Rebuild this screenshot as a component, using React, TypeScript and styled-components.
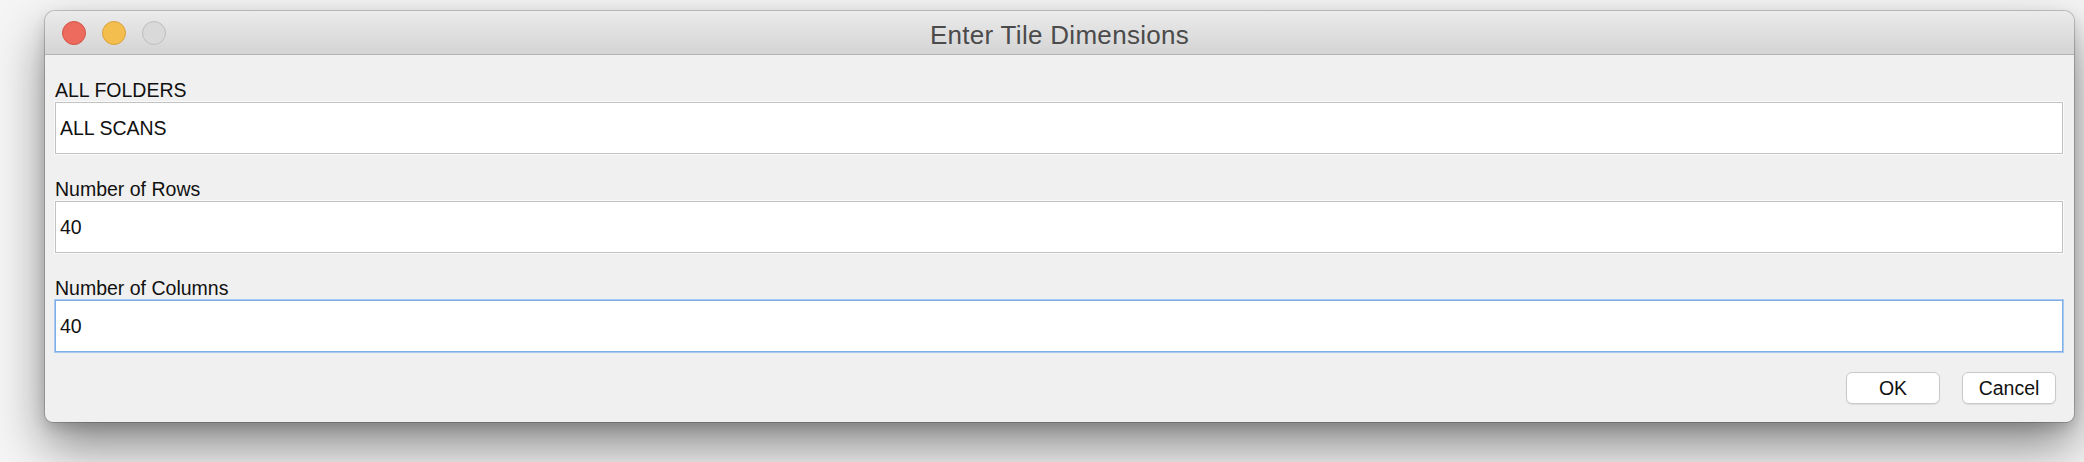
import React from "react";
import styled, { createGlobalStyle } from "styled-components";

const GlobalStyle = createGlobalStyle`
  html, body {
    margin: 0;
    padding: 0;
    background: #f5f5f5;
    font-family: "Liberation Sans", Arial, sans-serif;
  }
`;

const Page = styled.div`
  width: 2084px;
  height: 462px;
  padding: 11px 10px 0 45px;
  box-sizing: border-box;
  overflow: hidden;
`;

const Window = styled.div`
  width: 2029px;
  height: 411px;
  display: flex;
  flex-direction: column;
  background: #f0f0f0;
  border-radius: 10px 10px 8px 8px;
  box-shadow: 0 0 0 1px rgba(0, 0, 0, 0.18), 0 24px 50px rgba(0, 0, 0, 0.45),
    0 6px 14px rgba(0, 0, 0, 0.14);
  overflow: hidden;
`;

const TitleBar = styled.div`
  height: 44px;
  flex: none;
  display: grid;
  grid-template-columns: 1fr auto 1fr;
  align-items: center;
  padding: 0 17px;
  box-sizing: border-box;
  background: linear-gradient(#ebebeb, #d4d4d4);
  border-bottom: 1px solid #b4b4b4;
`;

const Lights = styled.div`
  display: flex;
  gap: 16px;
`;

const Light = styled.span<{ $fill: string; $edge: string }>`
  width: 24px;
  height: 24px;
  border-radius: 50%;
  box-sizing: border-box;
  background: ${(p) => p.$fill};
  border: 1px solid ${(p) => p.$edge};
`;

const Title = styled.div`
  font-size: 26px;
  line-height: 30px;
  padding-top: 4px;
  color: #4b4b4b;
  letter-spacing: 0.3px;
`;

const Content = styled.div`
  flex: 1;
  display: flex;
  flex-direction: column;
  padding: 24px 11px 18px 10px;
`;

const Field = styled.div`
  display: flex;
  flex-direction: column;
  & + & {
    margin-top: 24px;
  }
`;

const Label = styled.label`
  font-size: 19.5px;
  line-height: 22px;
  color: #111;
  margin-bottom: 1px;
`;

const Input = styled.input<{ $focused?: boolean }>`
  height: 52px;
  box-sizing: border-box;
  padding: 0 4px;
  font-family: "Liberation Sans", Arial, sans-serif;
  font-size: 19.5px;
  color: #111;
  background: #fff;
  border: 1px solid ${(p) => (p.$focused ? "#7eaee8" : "#c2c2c2")};
  box-shadow: ${(p) => (p.$focused ? "0 0 0 1px #a9c9f0" : "0 0 0 1px #fafafa")};
  outline: none;
`;

const Actions = styled.div`
  display: flex;
  justify-content: flex-end;
  gap: 22px;
  margin-top: 20px;
  padding-right: 7px;
`;

const Button = styled.button`
  width: 94px;
  height: 32px;
  font-family: "Liberation Sans", Arial, sans-serif;
  font-size: 19.5px;
  color: #111;
  background: #fff;
  border: 1px solid #c9c9c9;
  border-radius: 6px;
  box-shadow: 0 1px 1px rgba(0, 0, 0, 0.08);
  padding: 0;
`;

export default function App() {
  return (
    <>
      <GlobalStyle />
      <Page>
        <Window>
          <TitleBar>
            <Lights>
              <Light $fill="#ec6a5e" $edge="#d25448" />
              <Light $fill="#f4be4f" $edge="#d7a23f" />
              <Light $fill="#d9d9d9" $edge="#bdbdbd" />
            </Lights>
            <Title>Enter Tile Dimensions</Title>
            <span />
          </TitleBar>
          <Content>
            <Field>
              <Label>ALL FOLDERS</Label>
              <Input defaultValue="ALL SCANS" />
            </Field>
            <Field>
              <Label>Number of Rows</Label>
              <Input defaultValue="40" />
            </Field>
            <Field>
              <Label>Number of Columns</Label>
              <Input defaultValue="40" $focused />
            </Field>
            <Actions>
              <Button>OK</Button>
              <Button>Cancel</Button>
            </Actions>
          </Content>
        </Window>
      </Page>
    </>
  );
}
